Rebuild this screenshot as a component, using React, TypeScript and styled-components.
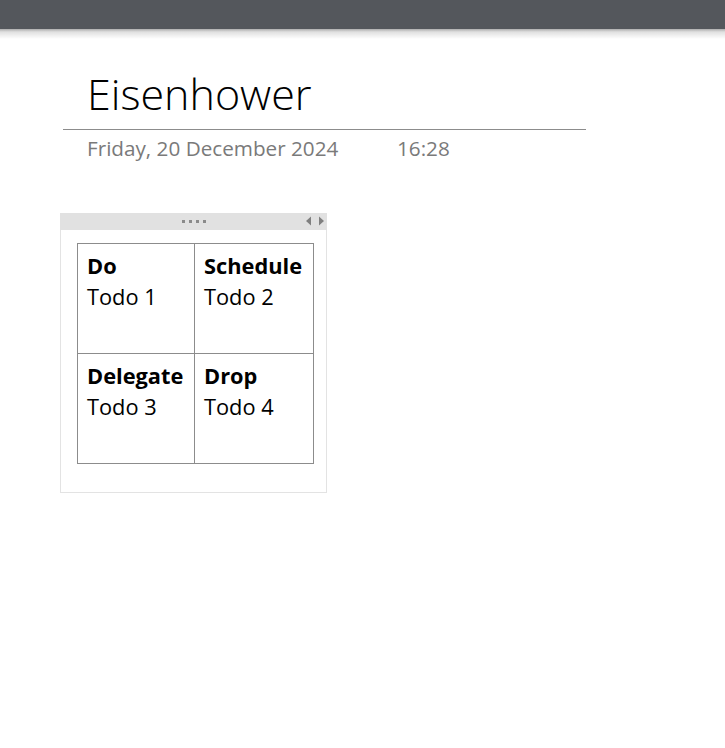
import React from "react";
import styled, { createGlobalStyle } from "styled-components";

const Global = createGlobalStyle`
  html, body { margin: 0; padding: 0; background: #ffffff; }
  body { font-family: "Open Sans", Lato, sans-serif; color: #000; }
`;

const TopBar = styled.div`
  height: 29px;
  background: #54575c;
`;

const BarShadow = styled.div`
  height: 10px;
  background: linear-gradient(to bottom, rgba(0,0,0,0.32), rgba(0,0,0,0.12) 30%, rgba(0,0,0,0));
`;

const Page = styled.div`
  padding-top: 30px;
`;

const TitleBlock = styled.div`
  margin-left: 63px;
  width: 523px;
`;

const Title = styled.h1`
  margin: 0;
  padding-left: 24px;
  font-family: "Open Sans", sans-serif;
  font-weight: 300;
  font-size: 43px;
  line-height: 50px;
  height: 60px;
  color: #000;
`;

const Rule = styled.div`
  height: 1px;
  background: #8c8c8c;
`;

const DateRow = styled.div`
  display: flex;
  padding-left: 24px;
  padding-top: 4px;
  font-family: "Open Sans", sans-serif;
  font-size: 20.7px;
  line-height: 28px;
  color: #7a7a7a;
`;

const DateText = styled.span`
  width: 310px;
`;

const Container = styled.div`
  margin-left: 60px;
  margin-top: 51px;
  width: 265px;
  height: 279px;
  border: 1px solid #e3e3e3;
  border-top: none;
  display: flex;
  flex-direction: column;
`;

const Handle = styled.div`
  height: 17px;
  background: #e1e1e1;
  position: relative;
  display: flex;
  align-items: center;
  justify-content: center;
  margin-right: -1px;
  margin-left: -1px;
`;

const Dots = styled.div`
  display: flex;
  gap: 4px;
`;

const Dot = styled.span`
  width: 3px;
  height: 3px;
  background: #8a8a8a;
`;

const Arrows = styled.div`
  position: absolute;
  right: 3px;
  top: 3px;
  display: flex;
  gap: 8px;
`;

const Body = styled.div`
  padding: 13px 0 0 16px;
`;

const Table = styled.table`
  border-collapse: collapse;
  font-family: "Open Sans", sans-serif;
  font-size: 21.8px;
  line-height: 31px;
`;

const Cell = styled.td<{ $w: number }>`
  border: 1px solid #8c8c8c;
  width: ${(p) => p.$w}px;
  height: 110px;
  padding: 6px 0 0 9px;
  vertical-align: top;
  box-sizing: border-box;
  white-space: nowrap;
`;

const Head = styled.div`
  font-weight: 700;
`;

const Item = styled.div`
  font-weight: 400;
`;

const quads = [
  [
    { h: "Do", t: "Todo 1" },
    { h: "Schedule", t: "Todo 2" },
  ],
  [
    { h: "Delegate", t: "Todo 3" },
    { h: "Drop", t: "Todo 4" },
  ],
];

export default function App() {
  return (
    <>
      <Global />
      <TopBar />
      <BarShadow />
      <Page>
        <TitleBlock>
          <Title>Eisenhower</Title>
          <Rule />
          <DateRow>
            <DateText>Friday, 20 December 2024</DateText>
            <span>16:28</span>
          </DateRow>
        </TitleBlock>
        <Container>
          <Handle>
            <Dots>
              <Dot />
              <Dot />
              <Dot />
              <Dot />
            </Dots>
            <Arrows>
              <svg width="5" height="10" viewBox="0 0 5 10">
                <path d="M5 0.5 L0 5 L5 9.5 Z" fill="#7f7f7f" />
              </svg>
              <svg width="5" height="10" viewBox="0 0 5 10">
                <path d="M0 0.5 L5 5 L0 9.5 Z" fill="#7f7f7f" />
              </svg>
            </Arrows>
          </Handle>
          <Body>
            <Table>
              <tbody>
                {quads.map((row, i) => (
                  <tr key={i}>
                    {row.map((c, j) => (
                      <Cell key={j} $w={j === 0 ? 117 : 119}>
                        <Head>{c.h}</Head>
                        <Item>{c.t}</Item>
                      </Cell>
                    ))}
                  </tr>
                ))}
              </tbody>
            </Table>
          </Body>
        </Container>
      </Page>
    </>
  );
}
